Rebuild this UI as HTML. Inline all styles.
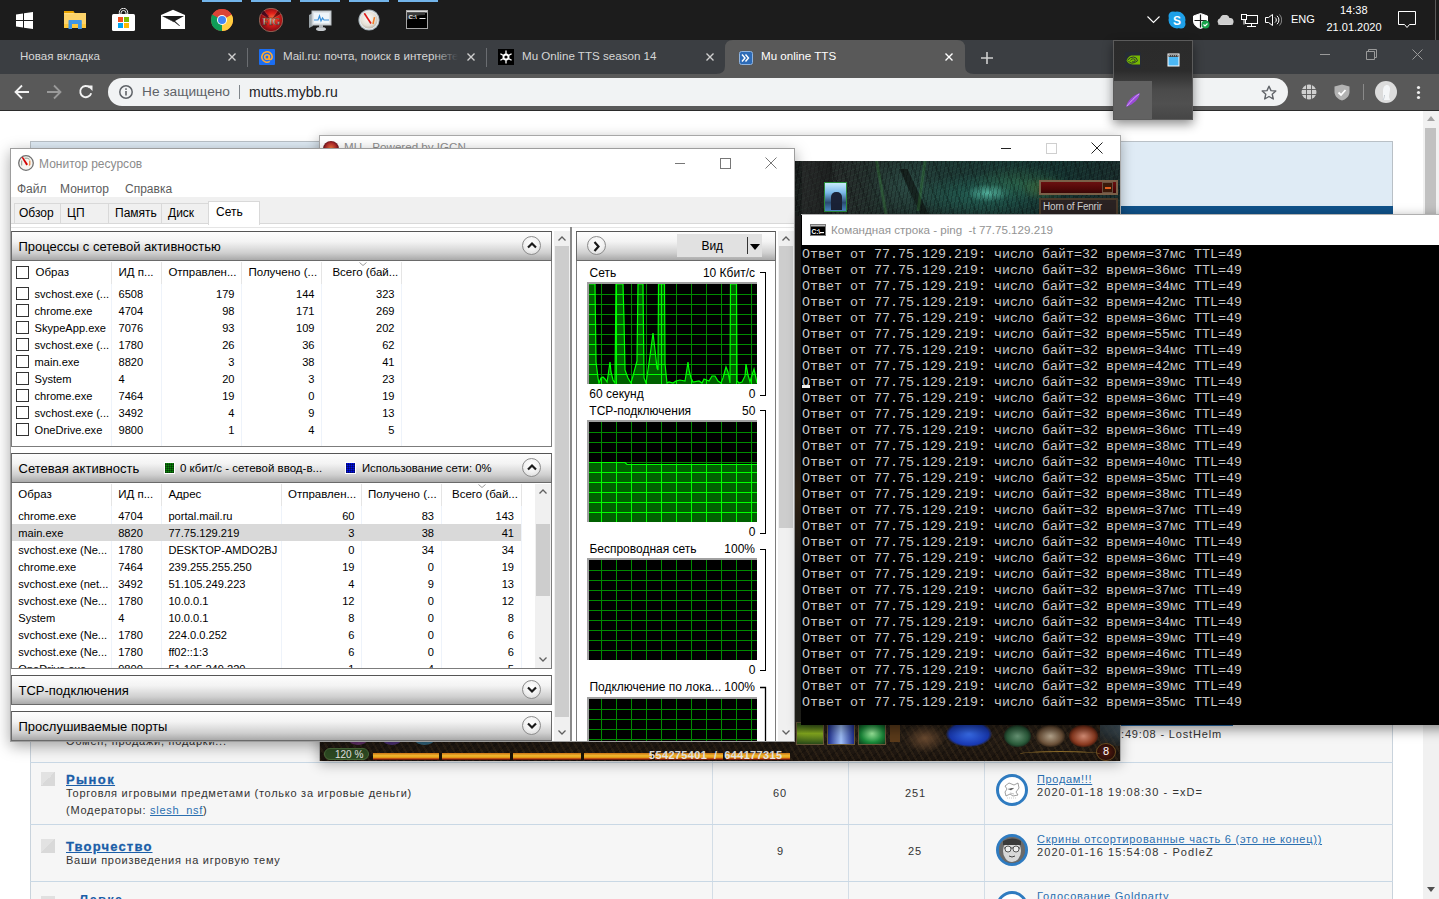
<!DOCTYPE html>
<html><head><meta charset="utf-8">
<style>
*{margin:0;padding:0;box-sizing:border-box}
html,body{width:1439px;height:899px;overflow:hidden;background:#fff;font-family:"Liberation Sans",sans-serif}
.a{position:absolute}
.t{position:absolute;white-space:pre;line-height:1}
#taskbar{left:0;top:0;width:1439px;height:40px;background:#1c1c1c}
.ind{top:0;height:2px;background:#72b4ea}
#tabs{left:0;top:40px;width:1439px;height:34px;background:#3b3e42}
#toolbar{left:0;top:74px;width:1439px;height:36px;background:#595959}
#page{left:0;top:111px;width:1439px;height:788px;background:#fff;overflow:hidden}
</style></head><body>

<!-- TASKBAR -->
<div id="taskbar" class="a">
  <div class="a ind" style="left:202px;width:40px"></div>
  <div class="a ind" style="left:251px;width:40px"></div>
  <div class="a ind" style="left:300px;width:40px"></div>
  <div class="a ind" style="left:349px;width:40px"></div>
  <div class="a ind" style="left:398px;width:40px"></div>

  <!-- win logo -->
  <svg class="a" style="left:16px;top:12px" width="17" height="17" viewBox="0 0 17 17"><path fill="#fff" d="M0 2.4L7 1.4V8H0z M8 1.25L17 0V8H8z M0 9H7V15.6L0 14.6z M8 9H17V17L8 15.75z"/></svg>
  <!-- explorer -->
  <svg class="a" style="left:64px;top:10px" width="22" height="20" viewBox="0 0 22 20"><path fill="#e9a400" d="M0 1h9.5l0.8 1.2V4H0z"/><path fill="#fcd36a" d="M0 3h22v15H0z"/><path fill="#ffe08a" d="M0 3.2h9.5v1H0z"/><path fill="#fdc83a" d="M0 14h22v4H0z"/><path fill="#3d95e6" d="M4.5 10.8Q4.5 10 5.3 10H17Q17.8 10 17.8 10.8V19H14V14H8V19H4.5z"/></svg>
  <!-- store -->
  <svg class="a" style="left:112px;top:8px" width="23" height="23" viewBox="0 0 23 23"><path fill="none" stroke="#fff" stroke-width="0.9" d="M7.3 7V4.5a4.2 4.2 0 0 1 8.4 0V7M9 7V5a2.5 2.5 0 0 1 5 0V7"/><rect x="0" y="6" width="23" height="17" rx="1.5" fill="#fff"/><rect x="6" y="9" width="5" height="5" fill="#f25022"/><rect x="12" y="9" width="5" height="5" fill="#7fba00"/><rect x="6" y="15" width="5" height="5" fill="#00a4ef"/><rect x="12" y="15" width="5" height="5" fill="#ffb900"/></svg>
  <!-- mail -->
  <svg class="a" style="left:160px;top:9px" width="26" height="21" viewBox="0 0 26 21"><path fill="#fff" d="M1 6L13 0.7L25 6V20H1z"/><path fill="#1c1c1c" d="M2 7H24L15 12L20 16.8L19.3 17L14 12.8z"/><path fill="#1c1c1c" d="M2 7L14.5 12.8 14 13.2z"/></svg>
  <!-- chrome -->
  <svg class="a" style="left:211px;top:9px" width="22" height="22" viewBox="0 0 22 22"><circle cx="11" cy="11" r="11" fill="#db4437"/><path fill="#0f9d58" d="M11 11L1.5 16.5A11 11 0 0 0 11 22z M11 11L1.5 16.5 0.6 5.5z"/><path fill="#0f9d58" d="M11 11 L5.5 20.5 A11 11 0 0 1 0 11 A11 11 0 0 1 1.47 5.5z"/><path fill="#ffcd40" d="M11 11L20.53 5.5A11 11 0 0 1 11 22 z"/><path fill="#db4437" d="M11 11L1.47 5.5A11 11 0 0 1 20.53 5.5z"/><circle cx="11" cy="11" r="5" fill="#fff"/><circle cx="11" cy="11" r="4" fill="#4285f4"/></svg>
  <!-- FIG game -->
  <svg class="a" style="left:259px;top:8px" width="24" height="24" viewBox="0 0 24 24"><defs><radialGradient id="fg" cx="55%" cy="45%" r="55%"><stop offset="0" stop-color="#ff7a40"/><stop offset="0.45" stop-color="#e0201a"/><stop offset="1" stop-color="#7a0812"/></radialGradient><linearGradient id="fgt" x1="0" y1="0" x2="0" y2="1"><stop offset="0" stop-color="#fff6e0"/><stop offset="0.5" stop-color="#c8b8a8"/><stop offset="1" stop-color="#6a5a70"/></linearGradient></defs><circle cx="12" cy="12" r="11.7" fill="url(#fg)" stroke="#b89a80" stroke-width="0.6"/><path d="M2 6L12 12 5 2M22 6L12 12 19 2" stroke="#ff8080" stroke-width="0.5" opacity="0.5"/><path d="M3 4l6 5" stroke="#3a0a30" stroke-width="3" opacity="0.5"/><text x="12.5" y="17" font-family="Liberation Serif" font-weight="bold" font-size="10" fill="url(#fgt)" text-anchor="middle" stroke="#3a2010" stroke-width="0.3">FIG</text></svg>
  <!-- resmon perf icon -->
  <svg class="a" style="left:308px;top:10px" width="24" height="22" viewBox="0 0 24 22"><path fill="#9aa3a8" d="M1 5l4-2v13l-4 2z"/><rect x="4" y="1" width="19" height="14" fill="#dfe4e8" stroke="#b8bec2"/><rect x="6" y="3" width="15" height="10" fill="#eef5fa"/><path fill="none" stroke="#3a8fd8" stroke-width="1.2" d="M6 10h4l1.5-4 1.5 5 1.5-3 1.5 2h5"/><ellipse cx="13" cy="19" rx="5" ry="2" fill="#c8ccd0"/><rect x="11" y="15" width="4" height="3" fill="#b0b5b9"/></svg>
  <!-- gauge -->
  <svg class="a" style="left:358px;top:9px" width="22" height="22" viewBox="0 0 22 22"><defs><radialGradient id="gg" cx="45%" cy="40%" r="60%"><stop offset="0" stop-color="#fbfaf6"/><stop offset="0.7" stop-color="#e6e0d6"/><stop offset="1" stop-color="#bdb6aa"/></radialGradient></defs><circle cx="11" cy="11" r="10.6" fill="#a9b4ba"/><circle cx="11" cy="11" r="9.6" fill="#e9eef0"/><circle cx="11" cy="11" r="8.6" fill="url(#gg)"/><path d="M6.3 4.3L13 14.5" stroke="#e01818" stroke-width="1.6"/><path d="M16.5 8.2L15 15" stroke="#f07a20" stroke-width="1.5"/></svg>
  <!-- cmd -->
  <svg class="a" style="left:406px;top:10px" width="22" height="19" viewBox="0 0 22 19"><rect x="0.5" y="0.5" width="21" height="18" fill="#000" stroke="#a8a8a8"/><rect x="1" y="1" width="20" height="1.5" fill="#dcdcdc"/><path d="M1 2.5H19V5Q8 5 1 10z" fill="#3a3a3a"/><text x="2.6" y="9.2" font-family="Liberation Sans" font-weight="bold" font-size="6.2" fill="#f0f0f0">C:\</text><rect x="13.5" y="8" width="6" height="1" fill="#e8e8e8"/></svg>

  <!-- tray -->
  <svg class="a" style="left:1147px;top:16px" width="13" height="8" viewBox="0 0 13 8"><path d="M0.5 0.5L6.5 6.5L12.5 0.5" stroke="#fff" fill="none" stroke-width="1.1"/></svg>
  <svg class="a" style="left:1168px;top:11px" width="18" height="18" viewBox="0 0 18 18"><circle cx="9" cy="9" r="8.5" fill="#1ea0e8"/><circle cx="5" cy="5" r="4.5" fill="#1ea0e8"/><circle cx="13" cy="13" r="4.5" fill="#1ea0e8"/><text x="9" y="13.5" font-family="Liberation Sans" font-weight="bold" font-size="12" fill="#fff" text-anchor="middle">S</text></svg>
  <svg class="a" style="left:1193px;top:13px" width="17" height="16" viewBox="0 0 17 16"><path d="M7.5 0.5L14.5 3V8c0 4-3.5 6.5-7 7.5C4 14.5 0.5 12 0.5 8V3z" fill="#fff" stroke="#fff"/><path d="M7.5 1.5V14.5M1.5 7.5H13.5" stroke="#1c1c1c" stroke-width="1.2"/><circle cx="12.5" cy="11.5" r="4" fill="#17a34a"/><path d="M10.5 11.5l1.5 1.5 2.5-2.5" stroke="#fff" stroke-width="1.1" fill="none"/></svg>
  <svg class="a" style="left:1217px;top:15px" width="17" height="10" viewBox="0 0 17 10"><path d="M3.5 10A3.5 3.5 0 0 1 3 3.2 5 5 0 0 1 12.5 3 3.5 3.5 0 0 1 13.5 10z" fill="#cfcfcf"/><path d="M1 10h15" stroke="#e0e0e0"/></svg>
  <svg class="a" style="left:1241px;top:14px" width="17" height="13" viewBox="0 0 17 13"><rect x="4.5" y="1.5" width="12" height="8" fill="none" stroke="#fff"/><rect x="0.5" y="0.5" width="5" height="5" fill="#1c1c1c" stroke="#fff"/><path d="M10.5 9.5v3M6 12.5h9M3 5.5v5" stroke="#fff"/></svg>
  <svg class="a" style="left:1265px;top:14px" width="17" height="12" viewBox="0 0 17 12"><path d="M0.5 3.5h3L7.5 0.5v11l-4-3h-3z" fill="none" stroke="#fff"/><path d="M10 3.5a3 3 0 0 1 0 5M12 1.8a5.5 5.5 0 0 1 0 8.4" stroke="#fff" fill="none"/><path d="M14.5 0.5a8 8 0 0 1 0 11" stroke="#888" fill="none"/></svg>
  <div class="t" style="left:1291px;top:13.7px;font-size:11px;color:#fff">ENG</div>
  <div class="t" style="left:1340px;top:4.7px;font-size:11px;color:#fff">14:38</div>
  <div class="t" style="left:1326.5px;top:22.3px;font-size:11px;color:#fff">21.01.2020</div>
  <svg class="a" style="left:1398px;top:11px" width="18" height="18" viewBox="0 0 18 18"><path d="M0.5 0.5h17v13h-6l-2.5 3-2.5-3h-6z" fill="none" stroke="#fff"/></svg>
  <div class="a" style="left:1435px;top:0;width:1px;height:40px;background:#5a5a5a"></div>
</div>

<!-- CHROME TABS -->
<div id="tabs" class="a">
  <div class="t" style="left:20px;top:10px;font-size:11.6px;color:#d6d6d6">Новая вкладка</div>
  <svg class="a" style="left:228px;top:13px" width="8" height="8" viewBox="0 0 8 8"><path d="M0.5 0.5L7.5 7.5M7.5 0.5L0.5 7.5" stroke="#cfcfcf" stroke-width="1.4"/></svg>
  <div class="a" style="left:247px;top:8px;width:1px;height:19px;background:#6a6d71"></div>
  <svg class="a" style="left:259px;top:9px" width="16" height="16" viewBox="0 0 16 16"><rect width="16" height="16" rx="1" fill="#1b6ef3"/><circle cx="8" cy="8" r="2.3" fill="none" stroke="#ffa930" stroke-width="1.6"/><path d="M10.3 6.2V9.2Q10.3 10.8 11.8 10.5Q13.2 10 13.2 7.8A5.2 5.2 0 1 0 10.8 12.4" fill="none" stroke="#ffa930" stroke-width="1.6"/></svg>
  <div class="a" style="left:283px;top:0;width:175px;height:34px;overflow:hidden">
    <div class="t" style="left:0;top:10px;font-size:11.6px;color:#d6d6d6">Mail.ru: почта, поиск в интернете</div>
    <div class="a" style="left:150px;top:0;width:25px;height:34px;background:linear-gradient(90deg,rgba(59,62,66,0),#3b3e42)"></div>
  </div>
  <svg class="a" style="left:467px;top:13px" width="8" height="8" viewBox="0 0 8 8"><path d="M0.5 0.5L7.5 7.5M7.5 0.5L0.5 7.5" stroke="#cfcfcf" stroke-width="1.4"/></svg>
  <div class="a" style="left:486px;top:8px;width:1px;height:19px;background:#6a6d71"></div>
  <svg class="a" style="left:498px;top:9px" width="16" height="16" viewBox="0 0 16 16"><rect width="16" height="16" fill="#000"/><g stroke="#fff" stroke-width="1.3"><path d="M8 1.5V14.5M2.4 4.7L13.6 11.3M2.4 11.3L13.6 4.7"/></g><circle cx="8" cy="8" r="3.5" fill="#fff"/><circle cx="8" cy="8" r="1.6" fill="#000"/></svg>
  <div class="t" style="left:522px;top:10px;font-size:11.6px;color:#d6d6d6">Mu Online TTS season 14</div>
  <svg class="a" style="left:706px;top:13px" width="8" height="8" viewBox="0 0 8 8"><path d="M0.5 0.5L7.5 7.5M7.5 0.5L0.5 7.5" stroke="#cfcfcf" stroke-width="1.4"/></svg>
  <!-- active tab -->
  <svg class="a" style="left:716px;top:0px" width="259" height="34" viewBox="0 0 259 34"><path d="M0 34 Q9 34 9 26 V8 Q9 0 17 0 H241 Q249 0 249 8 V26 Q249 34 258 34z" fill="#595959"/></svg>
  <svg class="a" style="left:739px;top:11px" width="14" height="14" viewBox="0 0 14 14"><rect x="0.5" y="0.5" width="13" height="13" rx="2" fill="#2d6bb7" stroke="#8fb4e0"/><path d="M3 3.5L6 7 3 10.5M6.5 3.5L9.5 7 6.5 10.5" stroke="#fff" stroke-width="1.4" fill="none"/></svg>
  <div class="t" style="left:761px;top:10px;font-size:11.6px;color:#fff">Mu online TTS</div>
  <svg class="a" style="left:945px;top:13px" width="8" height="8" viewBox="0 0 8 8"><path d="M0.5 0.5L7.5 7.5M7.5 0.5L0.5 7.5" stroke="#fff" stroke-width="1.4"/></svg>
  <svg class="a" style="left:981px;top:12px" width="12" height="12" viewBox="0 0 12 12"><path d="M6 0V12M0 6H12" stroke="#cfcfcf" stroke-width="1.6"/></svg>
  <div class="a" style="left:1320px;top:14px;width:10px;height:1px;background:#9a9a9a"></div>
  <svg class="a" style="left:1366px;top:9px" width="11" height="11" viewBox="0 0 11 11"><path d="M0.5 2.5h8v8h-8z M2.5 2.5v-2h8v8h-2" stroke="#9a9a9a" fill="none"/></svg>
  <svg class="a" style="left:1412px;top:9px" width="11" height="11" viewBox="0 0 11 11"><path d="M0.5 0.5L10.5 10.5M10.5 0.5L0.5 10.5" stroke="#9a9a9a"/></svg>
</div>
<div id="toolbar" class="a">
  <svg class="a" style="left:14px;top:10px" width="16" height="16" viewBox="0 0 16 16"><path d="M15 8H2M8 1.5L1.5 8 8 14.5" stroke="#f2f2f2" stroke-width="1.8" fill="none"/></svg>
  <svg class="a" style="left:46px;top:10px" width="16" height="16" viewBox="0 0 16 16"><path d="M1 8H14M8 1.5L14.5 8 8 14.5" stroke="#9a9a9a" stroke-width="1.8" fill="none"/></svg>
  <svg class="a" style="left:78px;top:10px" width="16" height="16" viewBox="0 0 16 16"><path d="M13.2 9.2A5.6 5.6 0 1 1 11.8 3.6" stroke="#f2f2f2" stroke-width="1.9" fill="none"/><path d="M9 1.5H14.5V7z" fill="#f2f2f2"/></svg>
  <div class="a" style="left:108px;top:4px;width:1180px;height:28px;border-radius:14px;background:#f1f3f4"></div>
  <svg class="a" style="left:119px;top:11px" width="14" height="14" viewBox="0 0 14 14"><circle cx="7" cy="7" r="6.2" fill="none" stroke="#5f6368" stroke-width="1.5"/><rect x="6.2" y="6" width="1.6" height="4.5" fill="#5f6368"/><rect x="6.2" y="3.3" width="1.6" height="1.6" fill="#5f6368"/></svg>
  <div class="t" style="left:142px;top:11px;font-size:13.7px;color:#5f6368">Не защищено</div>
  <div class="a" style="left:239px;top:11px;width:1px;height:14px;background:#80868b"></div>
  <div class="t" style="left:249px;top:11px;font-size:14px;color:#202124">mutts.mybb.ru</div>
  <svg class="a" style="left:1261px;top:11px" width="16" height="15" viewBox="0 0 16 15"><path d="M8 1.2L10 5.6 14.8 6 11.2 9.2 12.3 14 8 11.5 3.7 14 4.8 9.2 1.2 6 6 5.6z" fill="none" stroke="#5f6368" stroke-width="1.4" stroke-linejoin="round"/></svg>
  <svg class="a" style="left:1301px;top:10px" width="16" height="16" viewBox="0 0 16 16"><circle cx="8" cy="8" r="7.5" fill="#cfcfcf"/><g stroke="#595959" stroke-width="0.9" fill="none"><path d="M0.5 5.5H15.5M0.5 10.5H15.5M5.5 0.5V15.5M10.5 0.5V15.5"/></g></svg>
  <svg class="a" style="left:1334px;top:10px" width="16" height="17" viewBox="0 0 16 17"><path d="M8 0.5L15.5 2.5V8c0 4.5-4 7.5-7.5 8.5C4.5 15.5 0.5 12.5 0.5 8V2.5z" fill="#b3b3b3"/><path d="M4.5 8.5L7 11 11.5 6" stroke="#fff" stroke-width="1.8" fill="none"/></svg>
  <div class="a" style="left:1363px;top:10px;width:1px;height:16px;background:#8a8a8a"></div>
  <svg class="a" style="left:1375px;top:7px" width="22" height="22" viewBox="0 0 22 22"><circle cx="11" cy="11" r="11" fill="#dcdcdc"/><path d="M8 19V10c0-4 2-6 4-6s3.5 2 3 5-1 5-1 7l1 3z" fill="#f4f6f8"/><path d="M8 19c1-2 1.5-3 1.5-5" stroke="#c5ccd3" fill="none"/></svg>
  <svg class="a" style="left:1416px;top:11px" width="5" height="15" viewBox="0 0 5 15"><circle cx="2.5" cy="2.5" r="1.6" fill="#eee"/><circle cx="2.5" cy="7.5" r="1.6" fill="#eee"/><circle cx="2.5" cy="12.5" r="1.6" fill="#eee"/></svg>
</div>
<div class="a" style="left:0;top:110px;width:1439px;height:1px;background:#2b2b2b"></div>

<!-- PAGE -->
<div id="page" class="a">
  <!-- header box -->
  <div class="a" style="left:30px;top:30px;width:1363px;height:66px;background:#dfebf5;border:1px solid #b9c0c6;border-bottom:0"></div>
  <div class="a" style="left:30px;top:95px;width:1363px;height:30px;background:#10528a"></div>
  <!-- table -->
  <div class="a" style="left:30px;top:125px;width:1363px;height:670px;background:#f6f6f6;border-left:1px solid #c9d3dc;border-right:1px solid #c9d3dc"></div>
  <div class="a" style="left:712px;top:125px;width:1px;height:670px;background:#d3dde6"></div>
  <div class="a" style="left:848px;top:125px;width:1px;height:670px;background:#d3dde6"></div>
  <div class="a" style="left:984px;top:125px;width:1px;height:670px;background:#d3dde6"></div>
  <div class="a" style="left:30px;top:651px;width:1363px;height:1px;background:#c9d8e5"></div>
  <div class="a" style="left:30px;top:713px;width:1363px;height:1px;background:#c9d8e5"></div>
  <div class="a" style="left:30px;top:770px;width:1363px;height:1px;background:#c9d8e5"></div>

  <div class="t" style="left:66px;top:625px;font-size:11px;letter-spacing:0.75px;color:#333">Обмен, продажи, подарки...</div>
  <div class="t" style="left:1121px;top:617.5px;font-size:11px;letter-spacing:0.83px;color:#333">:49:08 - LostHelm</div>
  <div class="a" style="left:1121px;top:614px;width:112px;height:1px;background:#2a6fb0"></div>

  <!-- row Рынок -->
  <div class="a" style="left:41px;top:661px;width:14px;height:14px;background:linear-gradient(135deg,#e2e2e2 50%,#d9d9d9 50%)"></div>
  <div class="t" style="left:66px;top:662px;font-size:13px;font-weight:bold;letter-spacing:1.4px;color:#1b5ea8;text-decoration:underline;-webkit-text-stroke:0.3px #1b5ea8">Рынок</div>
  <div class="t" style="left:66px;top:677px;font-size:11px;letter-spacing:0.73px;color:#333">Торговля игровыми предметами (только за игровые деньги)</div>
  <div class="t" style="left:66px;top:694px;font-size:11px;letter-spacing:0.73px;color:#333">(Модераторы: <span style="color:#2a6fb0;text-decoration:underline">slesh_nsf</span>)</div>
  <div class="t" style="left:773px;top:677px;font-size:11px;letter-spacing:0.9px;color:#333">60</div>
  <div class="t" style="left:905px;top:677px;font-size:11px;letter-spacing:0.9px;color:#333">251</div>
  <div class="a" style="left:996px;top:663px;width:32px;height:32px;border-radius:50%;border:3px solid #2f7bc0;background:#fff;overflow:hidden"><svg width="26" height="26" viewBox="0 0 26 26"><path d="M6 9l4-3 5 2 4-2 1 5-3 4 2 3-5 1-3-2-4 2-1-4 2-3z" fill="none" stroke="#777" stroke-width="0.7"/><path d="M9 12l3 1 3-2M11 16l4 1" stroke="#999" stroke-width="0.6"/><path d="M8 21h10" stroke="#aaa" stroke-width="0.6" stroke-dasharray="1 1"/></svg></div>
  <div class="t" style="left:1037px;top:663px;font-size:11px;letter-spacing:0.67px;color:#2a6fb0;text-decoration:underline">Продам!!!</div>
  <div class="t" style="left:1037px;top:676px;font-size:11px;letter-spacing:1.07px;color:#333">2020-01-18 19:08:30 - =xD=</div>

  <!-- row Творчество -->
  <div class="a" style="left:41px;top:728px;width:14px;height:14px;background:linear-gradient(135deg,#e2e2e2 50%,#d9d9d9 50%)"></div>
  <div class="t" style="left:66px;top:729px;font-size:13px;font-weight:bold;letter-spacing:1.17px;color:#1b5ea8;text-decoration:underline;-webkit-text-stroke:0.3px #1b5ea8">Творчество</div>
  <div class="t" style="left:66px;top:744px;font-size:11px;letter-spacing:0.73px;color:#333">Ваши произведения на игровую тему</div>
  <div class="t" style="left:777px;top:735px;font-size:11px;letter-spacing:0.9px;color:#333">9</div>
  <div class="t" style="left:908px;top:735px;font-size:11px;letter-spacing:0.9px;color:#333">25</div>
  <div class="a" style="left:996px;top:723px;width:32px;height:32px;border-radius:50%;border:3px solid #2f7bc0;background:radial-gradient(circle at 50% 45%,#ddd 0,#bbb 40%,#555 75%);overflow:hidden"><svg width="26" height="26" viewBox="0 0 26 26"><rect width="26" height="26" fill="#6a6a6a"/><ellipse cx="13" cy="14" rx="9" ry="11" fill="#d8d8d8"/><path d="M5 11h16" stroke="#444" stroke-width="1.2"/><circle cx="9" cy="12" r="3" fill="#eee" stroke="#333" stroke-width="0.8"/><circle cx="17" cy="12" r="3" fill="#eee" stroke="#333" stroke-width="0.8"/><path d="M10 19q3 2 6 0" stroke="#444" fill="none"/><path d="M4 4q9-5 18 0v4H4z" fill="#3a3a3a"/></svg></div>
  <div class="t" style="left:1037px;top:723px;font-size:11px;letter-spacing:0.75px;color:#2a6fb0;text-decoration:underline">Скрины отсортированные часть 6 (это не конец))</div>
  <div class="t" style="left:1037px;top:736px;font-size:11px;letter-spacing:1.07px;color:#333">2020-01-16 15:54:08 - PodleZ</div>

  <!-- row 4 -->
  <div class="a" style="left:41px;top:785px;width:14px;height:14px;background:#e0e0e0"></div>
  <div class="t" style="left:79px;top:782px;font-size:13px;font-weight:bold;letter-spacing:1.2px;color:#1b5ea8">Лавка</div>
  <div class="a" style="left:996px;top:780px;width:32px;height:32px;border-radius:50%;border:3px solid #2f7bc0;background:#fff"></div>
  <div class="t" style="left:1037px;top:780px;font-size:11px;letter-spacing:0.75px;color:#2a6fb0;text-decoration:underline">Голосование Goldparty</div>

  <!-- scrollbar -->
  <div class="a" style="left:1423px;top:0;width:16px;height:788px;background:#f1f1f1"></div>
  <svg class="a" style="left:1427px;top:5px" width="8" height="5" viewBox="0 0 8 5"><path d="M0 5L4 0 8 5z" fill="#a3a3a3"/></svg>
  <div class="a" style="left:1425px;top:17px;width:11px;height:300px;background:#c1c1c1"></div>
  <svg class="a" style="left:1427px;top:776px" width="8" height="5" viewBox="0 0 8 5"><path d="M0 0L4 5 8 0z" fill="#505050"/></svg>
</div>

<!--GAME-->
<div class="a" style="left:319px;top:135px;width:802px;height:626px;background:#fff;border:1px solid #a8a8a8;box-shadow:0 3px 12px rgba(0,0,0,0.3)"></div>
<svg class="a" style="left:323px;top:141px" width="16" height="16" viewBox="0 0 16 16"><defs><radialGradient id="mg" cx="50%" cy="45%" r="55%"><stop offset="0" stop-color="#f27a40"/><stop offset="0.6" stop-color="#b22a2a"/><stop offset="1" stop-color="#3a0a14"/></radialGradient></defs><circle cx="8" cy="8" r="8" fill="url(#mg)"/></svg>
<div class="t" style="left:344px;top:141.4px;font-size:11.6px;color:#8e8e8e">MU - Powered by IGCN</div>
<div class="a" style="left:1001px;top:148px;width:10px;height:1px;background:#222"></div>
<div class="a" style="left:1046px;top:143px;width:11px;height:11px;border:1px solid #cfcfcf"></div>
<svg class="a" style="left:1091px;top:142px" width="12" height="12" viewBox="0 0 12 12"><path d="M0.5 0.5L11.5 11.5M11.5 0.5L0.5 11.5" stroke="#222" stroke-width="1"/></svg>
<div class="a" style="left:320px;top:161px;width:800px;height:600px;overflow:hidden;background:
radial-gradient(ellipse 22px 9px at 668px 32px, rgba(120,240,215,0.55), transparent),
radial-gradient(ellipse 70px 22px at 660px 34px, rgba(40,140,120,0.45), transparent),
radial-gradient(ellipse 40px 30px at 585px 25px, rgba(60,110,100,0.35), transparent),
radial-gradient(ellipse 50px 18px at 700px 22px, rgba(70,150,90,0.35), transparent),
linear-gradient(90deg,#1b1e1e 0px,#1d2120 475px,#262b2a 520px,#22302d 560px,#1e3834 620px,#1a3935 680px,#153230 740px,#1a2c2c 800px)">
<div class="a" style="left:0;top:0;width:800px;height:600px;opacity:0.7;background-image:repeating-linear-gradient(100deg,rgba(0,0,0,0.35) 0 1px,transparent 1px 4px),repeating-linear-gradient(160deg,rgba(80,150,110,0.12) 0 1px,transparent 1px 5px),repeating-linear-gradient(70deg,rgba(0,0,0,0.25) 0 2px,transparent 2px 11px)"></div>
<div class="a" style="left:482px;top:0;width:30px;height:60px;background:linear-gradient(90deg,rgba(60,60,60,0.35),rgba(20,20,20,0.5))"></div>
<div class="a" style="left:590px;top:8px;width:8px;height:45px;background:rgba(10,10,8,0.55);transform:skewX(25deg)"></div>
<div class="a" style="left:560px;top:0;width:3px;height:55px;background:rgba(70,170,70,0.25);transform:skewX(10deg)"></div>
<div class="a" style="left:600px;top:0;width:3px;height:50px;background:rgba(70,170,70,0.25);transform:skewX(-8deg)"></div>
<div class="a" style="left:700px;top:15px;width:50px;height:25px;background:radial-gradient(rgba(120,160,60,0.3),transparent 70%)"></div>
<div class="a" style="left:504px;top:21px;width:23px;height:30px;border:1px solid #2a8a3a;background:linear-gradient(#c8ecfc,#7ab8e8 35%,#2a4a70 70%,#4a8ac8)"></div>
<div class="a" style="left:511px;top:31px;width:11px;height:18px;border-radius:5px 5px 0 0;background:#1a2236"></div>
<div class="a" style="left:719px;top:19px;width:79px;height:15px;background:linear-gradient(#6a1010,#520808 60%,#3a0606);border:2px solid #7a6048"></div>
<div class="a" style="left:782px;top:21px;width:11px;height:11px;background:#3a1a0a;border:1px solid #6a5040"></div>
<div class="a" style="left:785px;top:26px;width:6px;height:2px;background:#e06020"></div>
<div class="a" style="left:719px;top:37px;width:79px;height:18px;background:#2a2222;border:2px solid #4a3a2a"></div>
<div class="t" style="left:723px;top:41px;font-size:10px;letter-spacing:-0.2px;color:#cfcfcf">Horn of Fenrir</div>
<!-- left strip texture near x 475-482 -->
<div class="a" style="left:474px;top:55px;width:8px;height:510px;background:linear-gradient(#222 0%,#2a2218 20%,#1a1a1a 40%,#3a2a18 55%,#1c1c1c 70%,#2a2a22 100%)"></div>
<!-- bottom HUD -->
<div class="a" style="left:0;top:562px;width:800px;height:38px;background:linear-gradient(#2a2118,#231b14 50%,#1a130d)"></div>
<div class="a" style="left:0;top:562px;width:800px;height:38px;background-image:repeating-linear-gradient(60deg,rgba(120,90,50,0.15) 0 2px,transparent 2px 6px),repeating-linear-gradient(-40deg,rgba(0,0,0,0.2) 0 2px,transparent 2px 7px)"></div>
<div class="a" style="left:29px;top:574px;width:18px;height:10px;border-radius:50%;background:rgba(130,60,150,0.7)"></div>
<div class="a" style="left:63px;top:574px;width:18px;height:10px;border-radius:50%;background:rgba(100,60,170,0.7)"></div>
<div class="a" style="left:95px;top:574px;width:19px;height:10px;border-radius:50%;background:rgba(60,140,180,0.7)"></div>
<div class="a" style="left:476px;top:561px;width:28px;height:23px;background:linear-gradient(#2a4a1a,#8ab020 50%,#2a4a1a);border:1px solid #6a5a3a"></div>
<div class="a" style="left:507px;top:561px;width:28px;height:23px;background:linear-gradient(90deg,#1a2a8a,#a0c0f8 50%,#1a2a8a);border:1px solid #6a5a3a"></div>
<div class="a" style="left:538px;top:561px;width:28px;height:23px;background:radial-gradient(#a0f0a0,#1a8a3a 60%,#0a3a1a);border:1px solid #6a5a3a"></div>
<div class="a" style="left:570px;top:561px;width:10px;height:20px;background:#5a3a1a"></div>
<div class="a" style="left:585px;top:562px;width:40px;height:30px;background:radial-gradient(#6a4a30,transparent 70%)"></div>
<div class="a" style="left:626px;top:560px;width:46px;height:26px;border-radius:50%;background:radial-gradient(#3a70f0,#1838b0 60%,transparent 72%)"></div>
<div class="a" style="left:684px;top:564px;width:27px;height:22px;border-radius:50%;background:radial-gradient(#6a9878,#2a5a3a 55%,#101a12 80%)"></div>
<div class="a" style="left:716px;top:564px;width:29px;height:22px;border-radius:50%;background:radial-gradient(#b8a890,#6a5038 55%,#1a120a 80%)"></div>
<div class="a" style="left:749px;top:564px;width:29px;height:22px;border-radius:50%;background:radial-gradient(#d89078,#8a3a20 55%,#2a0e06 80%)"></div>
<div class="a" style="left:780px;top:560px;width:20px;height:25px;background:linear-gradient(200deg,rgba(90,120,140,0.8),rgba(40,58,68,0.6) 60%,transparent)"></div>
<div class="a" style="left:776px;top:582px;width:20px;height:18px;border-radius:50%;background:radial-gradient(#5a1a10,#2a0e08 70%);border:1px solid #6a4a20"></div><div class="a" style="left:700px;top:590px;width:80px;height:6px;border-top:1px solid #8a6a2a;border-radius:50%"></div>
<div class="t" style="left:783px;top:585px;font-size:11px;color:#fff">8</div>
<div class="a" style="left:4px;top:587px;width:45px;height:12px;border-radius:6px;background:#2d4a22;border:1px solid #4a6a3a"></div>
<div class="t" style="left:15px;top:589px;font-size:10px;color:#e8e8e8">120 %</div>
<div class="a" style="left:53px;top:592px;width:417px;height:7px;background:linear-gradient(#d87a18,#f8c030 40%,#e89a18 65%,#b03010 85%,#3a0a04)"></div>
<div class="a" style="left:53px;top:592px;width:417px;height:7px;background-image:repeating-linear-gradient(90deg,transparent 0 66px,#1a1208 66px 69px,transparent 69px 71px)"></div>
<div class="t" style="left:329px;top:588.5px;font-size:11px;letter-spacing:0.35px;color:#e8e8e8;font-weight:bold">554275401  /  644177315</div>
</div>
<!--/GAME-->
<!--RESMON-->
<div class="a" style="left:10px;top:148px;width:785px;height:594px;background:#fff;border:1px solid #9d9d9d;box-shadow:0 4px 14px rgba(0,0,0,0.35)"></div>
<svg class="a" style="left:18px;top:155px" width="16" height="16" viewBox="0 0 16 16"><circle cx="8" cy="8" r="7.3" fill="#f6f4f0" stroke="#707070" stroke-width="1.3"/><path d="M3.7 10.5V5.5M6.5 3.2Q9.5 2.6 11.5 4.3" stroke="#8a9a8a" stroke-width="1" fill="none"/><path d="M11.8 5.5V9.5L11 10.5" stroke="#e8782a" stroke-width="1.1" fill="none"/><path d="M3.6 2.4L5 1.9L10 9.3L8.3 10.6z" fill="#d40000"/></svg>
<div class="t" style="left:39px;top:158.3px;font-size:12px;color:#8b8b8b;">Монитор ресурсов</div>
<div class="a" style="left:675px;top:163px;width:10px;height:1px;background:#777"></div>
<div class="a" style="left:720px;top:158px;width:11px;height:11px;border:1px solid #777"></div>
<svg class="a" style="left:765px;top:157px" width="12" height="12" viewBox="0 0 12 12"><path d="M0.5 0.5L11.5 11.5M11.5 0.5L0.5 11.5" stroke="#777" stroke-width="1"/></svg>
<div class="t" style="left:17px;top:182.7px;font-size:12px;color:#5c5c5c;">Файл</div>
<div class="t" style="left:60px;top:182.7px;font-size:12px;color:#5c5c5c;">Монитор</div>
<div class="t" style="left:125px;top:182.7px;font-size:12px;color:#5c5c5c;">Справка</div>
<div class="a" style="left:11px;top:197px;width:783px;height:27px;background:#f0f0f0"></div>
<div class="a" style="left:11px;top:223px;width:783px;height:1px;background:#d9d9d9"></div>
<div class="a" style="left:11px;top:227px;width:783px;height:1px;background:#e5e5e5"></div>
<div class="a" style="left:14px;top:203px;width:47px;height:21px;border:1px solid #d9d9d9;background:#f0f0f0"></div>
<div class="t" style="left:19px;top:207.1px;font-size:12px;color:#000;">Обзор</div>
<div class="a" style="left:60px;top:203px;width:49px;height:21px;border:1px solid #d9d9d9;background:#f0f0f0"></div>
<div class="t" style="left:67px;top:207.1px;font-size:12px;color:#000;">ЦП</div>
<div class="a" style="left:108px;top:203px;width:54px;height:21px;border:1px solid #d9d9d9;background:#f0f0f0"></div>
<div class="t" style="left:115px;top:207.1px;font-size:12px;color:#000;">Память</div>
<div class="a" style="left:161px;top:203px;width:48px;height:21px;border:1px solid #d9d9d9;background:#f0f0f0"></div>
<div class="t" style="left:168px;top:207.1px;font-size:12px;color:#000;">Диск</div>
<div class="a" style="left:208px;top:201px;width:52px;height:24px;border:1px solid #d9d9d9;border-bottom:0;background:#fff"></div>
<div class="t" style="left:216px;top:206.3px;font-size:12px;color:#000;">Сеть</div>
<div class="a" style="left:11px;top:231px;width:541px;height:30px;border:1px solid #6a6a6a;border-top-color:#555;background:linear-gradient(#fdfdfd 0%,#f3f3f3 35%,#cfcfcf 75%,#a9a9a9 100%)"></div>
<div class="t" style="left:18.5px;top:239.7px;font-size:13px;color:#000;">Процессы с сетевой активностью</div>
<div class="a" style="left:522px;top:236px;width:19px;height:19px;border-radius:50%;border:1px solid #8c8c8c;background:radial-gradient(circle at 50% 35%,#fff 0,#f2f2f2 50%,#d4d4d4 100%)"></div>
<svg class="a" style="left:527px;top:241px" width="10" height="8" viewBox="0 0 10 8"><path d="M1 6.5L5 2.5 9 6.5" stroke="#1a1a1a" stroke-width="2.2" fill="none"/></svg>
<div class="a" style="left:11px;top:261px;width:541px;height:186px;background:#fff;border:1px solid #7c7c7c;border-top:0"></div>
<div class="a" style="left:111px;top:262px;width:1px;height:22px;background:#e5e5e5"></div>
<div class="a" style="left:111px;top:284px;width:1px;height:162px;background:#eef3fa"></div>
<div class="a" style="left:161px;top:262px;width:1px;height:22px;background:#e5e5e5"></div>
<div class="a" style="left:161px;top:284px;width:1px;height:162px;background:#eef3fa"></div>
<div class="a" style="left:241px;top:262px;width:1px;height:22px;background:#e5e5e5"></div>
<div class="a" style="left:241px;top:284px;width:1px;height:162px;background:#eef3fa"></div>
<div class="a" style="left:321px;top:262px;width:1px;height:22px;background:#e5e5e5"></div>
<div class="a" style="left:321px;top:284px;width:1px;height:162px;background:#eef3fa"></div>
<div class="a" style="left:401px;top:262px;width:1px;height:22px;background:#e5e5e5"></div>
<div class="a" style="left:401px;top:284px;width:1px;height:162px;background:#eef3fa"></div>
<div class="a" style="left:16px;top:266px;width:13px;height:13px;border:1px solid #333;background:#fff"></div>
<div class="t" style="left:35.5px;top:267.3px;font-size:11.5px;color:#000;">Образ</div>
<div class="t" style="left:118.5px;top:267.3px;font-size:11.5px;color:#000;">ИД п...</div>
<div class="t" style="left:168.4px;top:267.3px;font-size:11.5px;color:#000;">Отправлен...</div>
<div class="t" style="left:248.5px;top:267.3px;font-size:11.5px;color:#000;">Получено (...</div>
<div class="t" style="left:332.4px;top:267.3px;font-size:11.5px;color:#000;">Всего (бай...</div>
<svg class="a" style="left:359px;top:262px" width="8" height="4" viewBox="0 0 8 4"><path d="M0.5 0.5L4 3.5 7.5 0.5" stroke="#9a9a9a" fill="none"/></svg>
<div class="a" style="left:16px;top:287px;width:13px;height:13px;border:1px solid #333;background:#fff"></div>
<div class="t" style="left:34.5px;top:288.8px;font-size:11.1px;color:#000;">svchost.exe (...</div>
<div class="t" style="left:118.5px;top:288.8px;font-size:11.1px;color:#000;">6508</div>
<div class="t" style="right:1204.5px;top:288.8px;font-size:11.1px;color:#000;">179</div>
<div class="t" style="right:1124.5px;top:288.8px;font-size:11.1px;color:#000;">144</div>
<div class="t" style="right:1044.5px;top:288.8px;font-size:11.1px;color:#000;">323</div>
<div class="a" style="left:16px;top:304px;width:13px;height:13px;border:1px solid #333;background:#fff"></div>
<div class="t" style="left:34.5px;top:305.8px;font-size:11.1px;color:#000;">chrome.exe</div>
<div class="t" style="left:118.5px;top:305.8px;font-size:11.1px;color:#000;">4704</div>
<div class="t" style="right:1204.5px;top:305.8px;font-size:11.1px;color:#000;">98</div>
<div class="t" style="right:1124.5px;top:305.8px;font-size:11.1px;color:#000;">171</div>
<div class="t" style="right:1044.5px;top:305.8px;font-size:11.1px;color:#000;">269</div>
<div class="a" style="left:16px;top:321px;width:13px;height:13px;border:1px solid #333;background:#fff"></div>
<div class="t" style="left:34.5px;top:322.8px;font-size:11.1px;color:#000;">SkypeApp.exe</div>
<div class="t" style="left:118.5px;top:322.8px;font-size:11.1px;color:#000;">7076</div>
<div class="t" style="right:1204.5px;top:322.8px;font-size:11.1px;color:#000;">93</div>
<div class="t" style="right:1124.5px;top:322.8px;font-size:11.1px;color:#000;">109</div>
<div class="t" style="right:1044.5px;top:322.8px;font-size:11.1px;color:#000;">202</div>
<div class="a" style="left:16px;top:338px;width:13px;height:13px;border:1px solid #333;background:#fff"></div>
<div class="t" style="left:34.5px;top:339.8px;font-size:11.1px;color:#000;">svchost.exe (...</div>
<div class="t" style="left:118.5px;top:339.8px;font-size:11.1px;color:#000;">1780</div>
<div class="t" style="right:1204.5px;top:339.8px;font-size:11.1px;color:#000;">26</div>
<div class="t" style="right:1124.5px;top:339.8px;font-size:11.1px;color:#000;">36</div>
<div class="t" style="right:1044.5px;top:339.8px;font-size:11.1px;color:#000;">62</div>
<div class="a" style="left:16px;top:355px;width:13px;height:13px;border:1px solid #333;background:#fff"></div>
<div class="t" style="left:34.5px;top:356.8px;font-size:11.1px;color:#000;">main.exe</div>
<div class="t" style="left:118.5px;top:356.8px;font-size:11.1px;color:#000;">8820</div>
<div class="t" style="right:1204.5px;top:356.8px;font-size:11.1px;color:#000;">3</div>
<div class="t" style="right:1124.5px;top:356.8px;font-size:11.1px;color:#000;">38</div>
<div class="t" style="right:1044.5px;top:356.8px;font-size:11.1px;color:#000;">41</div>
<div class="a" style="left:16px;top:372px;width:13px;height:13px;border:1px solid #333;background:#fff"></div>
<div class="t" style="left:34.5px;top:373.8px;font-size:11.1px;color:#000;">System</div>
<div class="t" style="left:118.5px;top:373.8px;font-size:11.1px;color:#000;">4</div>
<div class="t" style="right:1204.5px;top:373.8px;font-size:11.1px;color:#000;">20</div>
<div class="t" style="right:1124.5px;top:373.8px;font-size:11.1px;color:#000;">3</div>
<div class="t" style="right:1044.5px;top:373.8px;font-size:11.1px;color:#000;">23</div>
<div class="a" style="left:16px;top:389px;width:13px;height:13px;border:1px solid #333;background:#fff"></div>
<div class="t" style="left:34.5px;top:390.8px;font-size:11.1px;color:#000;">chrome.exe</div>
<div class="t" style="left:118.5px;top:390.8px;font-size:11.1px;color:#000;">7464</div>
<div class="t" style="right:1204.5px;top:390.8px;font-size:11.1px;color:#000;">19</div>
<div class="t" style="right:1124.5px;top:390.8px;font-size:11.1px;color:#000;">0</div>
<div class="t" style="right:1044.5px;top:390.8px;font-size:11.1px;color:#000;">19</div>
<div class="a" style="left:16px;top:406px;width:13px;height:13px;border:1px solid #333;background:#fff"></div>
<div class="t" style="left:34.5px;top:407.8px;font-size:11.1px;color:#000;">svchost.exe (...</div>
<div class="t" style="left:118.5px;top:407.8px;font-size:11.1px;color:#000;">3492</div>
<div class="t" style="right:1204.5px;top:407.8px;font-size:11.1px;color:#000;">4</div>
<div class="t" style="right:1124.5px;top:407.8px;font-size:11.1px;color:#000;">9</div>
<div class="t" style="right:1044.5px;top:407.8px;font-size:11.1px;color:#000;">13</div>
<div class="a" style="left:16px;top:423px;width:13px;height:13px;border:1px solid #333;background:#fff"></div>
<div class="t" style="left:34.5px;top:424.8px;font-size:11.1px;color:#000;">OneDrive.exe</div>
<div class="t" style="left:118.5px;top:424.8px;font-size:11.1px;color:#000;">9800</div>
<div class="t" style="right:1204.5px;top:424.8px;font-size:11.1px;color:#000;">1</div>
<div class="t" style="right:1124.5px;top:424.8px;font-size:11.1px;color:#000;">4</div>
<div class="t" style="right:1044.5px;top:424.8px;font-size:11.1px;color:#000;">5</div>
<div class="a" style="left:11px;top:453px;width:541px;height:30px;border:1px solid #6a6a6a;border-top-color:#555;background:linear-gradient(#fdfdfd 0%,#f3f3f3 35%,#cfcfcf 75%,#a9a9a9 100%)"></div>
<div class="t" style="left:18.5px;top:461.7px;font-size:13px;color:#000;">Сетевая активность</div>
<div class="a" style="left:522px;top:458px;width:19px;height:19px;border-radius:50%;border:1px solid #8c8c8c;background:radial-gradient(circle at 50% 35%,#fff 0,#f2f2f2 50%,#d4d4d4 100%)"></div>
<svg class="a" style="left:527px;top:463px" width="10" height="8" viewBox="0 0 10 8"><path d="M1 6.5L5 2.5 9 6.5" stroke="#1a1a1a" stroke-width="2.2" fill="none"/></svg>
<div class="a" style="left:164px;top:461.5px;width:11px;height:12px;border:1px solid #fff;background:#0a8a0a;background-image:repeating-linear-gradient(90deg,rgba(0,0,0,.35) 0 1px,transparent 1px 2px),repeating-linear-gradient(0deg,rgba(0,0,0,.35) 0 1px,transparent 1px 2px)"></div>
<div class="t" style="left:180px;top:462.7px;font-size:11.5px;color:#000;">0 кбит/с - сетевой ввод-в...</div>
<div class="a" style="left:345px;top:462px;width:11px;height:12px;border:1px solid #fff;background:#0010f0;background-image:repeating-linear-gradient(90deg,rgba(0,0,0,.35) 0 1px,transparent 1px 2px),repeating-linear-gradient(0deg,rgba(0,0,0,.35) 0 1px,transparent 1px 2px)"></div>
<div class="t" style="left:362px;top:462.8px;font-size:11.3px;color:#000;">Использование сети: 0%</div>
<div class="a" style="left:11px;top:483px;width:541px;height:186px;background:#fff;border:1px solid #7c7c7c;border-top:0;overflow:hidden"></div>
<div class="a" style="left:111px;top:484px;width:1px;height:22px;background:#e5e5e5"></div>
<div class="a" style="left:111px;top:506px;width:1px;height:162px;background:#eef3fa"></div>
<div class="a" style="left:161px;top:484px;width:1px;height:22px;background:#e5e5e5"></div>
<div class="a" style="left:161px;top:506px;width:1px;height:162px;background:#eef3fa"></div>
<div class="a" style="left:281px;top:484px;width:1px;height:22px;background:#e5e5e5"></div>
<div class="a" style="left:281px;top:506px;width:1px;height:162px;background:#eef3fa"></div>
<div class="a" style="left:361px;top:484px;width:1px;height:22px;background:#e5e5e5"></div>
<div class="a" style="left:361px;top:506px;width:1px;height:162px;background:#eef3fa"></div>
<div class="a" style="left:441px;top:484px;width:1px;height:22px;background:#e5e5e5"></div>
<div class="a" style="left:441px;top:506px;width:1px;height:162px;background:#eef3fa"></div>
<div class="a" style="left:521px;top:484px;width:1px;height:22px;background:#e5e5e5"></div>
<div class="a" style="left:521px;top:506px;width:1px;height:162px;background:#eef3fa"></div>
<div class="t" style="left:18.3px;top:489.1px;font-size:11.5px;color:#000;">Образ</div>
<div class="t" style="left:118.2px;top:489.1px;font-size:11.5px;color:#000;">ИД п...</div>
<div class="t" style="left:168.4px;top:489.1px;font-size:11.5px;color:#000;">Адрес</div>
<div class="t" style="left:288px;top:489.1px;font-size:11.5px;color:#000;">Отправлен...</div>
<div class="t" style="left:368px;top:489.1px;font-size:11.5px;color:#000;">Получено (...</div>
<div class="t" style="left:452px;top:489.1px;font-size:11.5px;color:#000;">Всего (бай...</div>
<svg class="a" style="left:478px;top:484px" width="8" height="4" viewBox="0 0 8 4"><path d="M0.5 0.5L4 3.5 7.5 0.5" stroke="#9a9a9a" fill="none"/></svg>
<div class="a" style="left:12px;top:524px;width:509px;height:17px;background:#d9d9d9"></div>
<div class="a" style="left:0;top:0;width:1439px;height:668px;overflow:hidden">
<div class="t" style="left:18.3px;top:510.8px;font-size:11.1px;color:#000;">chrome.exe</div>
<div class="t" style="left:118.2px;top:510.8px;font-size:11.1px;color:#000;">4704</div>
<div class="t" style="left:168.4px;top:510.8px;font-size:11.1px;color:#000;">portal.mail.ru</div>
<div class="t" style="right:1084.5px;top:510.8px;font-size:11.1px;color:#000;">60</div>
<div class="t" style="right:1005px;top:510.8px;font-size:11.1px;color:#000;">83</div>
<div class="t" style="right:925px;top:510.8px;font-size:11.1px;color:#000;">143</div>
<div class="t" style="left:18.3px;top:527.8px;font-size:11.1px;color:#000;">main.exe</div>
<div class="t" style="left:118.2px;top:527.8px;font-size:11.1px;color:#000;">8820</div>
<div class="t" style="left:168.4px;top:527.8px;font-size:11.1px;color:#000;">77.75.129.219</div>
<div class="t" style="right:1084.5px;top:527.8px;font-size:11.1px;color:#000;">3</div>
<div class="t" style="right:1005px;top:527.8px;font-size:11.1px;color:#000;">38</div>
<div class="t" style="right:925px;top:527.8px;font-size:11.1px;color:#000;">41</div>
<div class="t" style="left:18.3px;top:544.8px;font-size:11.1px;color:#000;">svchost.exe (Ne...</div>
<div class="t" style="left:118.2px;top:544.8px;font-size:11.1px;color:#000;">1780</div>
<div class="t" style="left:168.4px;top:544.8px;font-size:11.1px;color:#000;">DESKTOP-AMDO2BJ</div>
<div class="t" style="right:1084.5px;top:544.8px;font-size:11.1px;color:#000;">0</div>
<div class="t" style="right:1005px;top:544.8px;font-size:11.1px;color:#000;">34</div>
<div class="t" style="right:925px;top:544.8px;font-size:11.1px;color:#000;">34</div>
<div class="t" style="left:18.3px;top:561.8px;font-size:11.1px;color:#000;">chrome.exe</div>
<div class="t" style="left:118.2px;top:561.8px;font-size:11.1px;color:#000;">7464</div>
<div class="t" style="left:168.4px;top:561.8px;font-size:11.1px;color:#000;">239.255.255.250</div>
<div class="t" style="right:1084.5px;top:561.8px;font-size:11.1px;color:#000;">19</div>
<div class="t" style="right:1005px;top:561.8px;font-size:11.1px;color:#000;">0</div>
<div class="t" style="right:925px;top:561.8px;font-size:11.1px;color:#000;">19</div>
<div class="t" style="left:18.3px;top:578.8px;font-size:11.1px;color:#000;">svchost.exe (net...</div>
<div class="t" style="left:118.2px;top:578.8px;font-size:11.1px;color:#000;">3492</div>
<div class="t" style="left:168.4px;top:578.8px;font-size:11.1px;color:#000;">51.105.249.223</div>
<div class="t" style="right:1084.5px;top:578.8px;font-size:11.1px;color:#000;">4</div>
<div class="t" style="right:1005px;top:578.8px;font-size:11.1px;color:#000;">9</div>
<div class="t" style="right:925px;top:578.8px;font-size:11.1px;color:#000;">13</div>
<div class="t" style="left:18.3px;top:595.8px;font-size:11.1px;color:#000;">svchost.exe (Ne...</div>
<div class="t" style="left:118.2px;top:595.8px;font-size:11.1px;color:#000;">1780</div>
<div class="t" style="left:168.4px;top:595.8px;font-size:11.1px;color:#000;">10.0.0.1</div>
<div class="t" style="right:1084.5px;top:595.8px;font-size:11.1px;color:#000;">12</div>
<div class="t" style="right:1005px;top:595.8px;font-size:11.1px;color:#000;">0</div>
<div class="t" style="right:925px;top:595.8px;font-size:11.1px;color:#000;">12</div>
<div class="t" style="left:18.3px;top:612.8px;font-size:11.1px;color:#000;">System</div>
<div class="t" style="left:118.2px;top:612.8px;font-size:11.1px;color:#000;">4</div>
<div class="t" style="left:168.4px;top:612.8px;font-size:11.1px;color:#000;">10.0.0.1</div>
<div class="t" style="right:1084.5px;top:612.8px;font-size:11.1px;color:#000;">8</div>
<div class="t" style="right:1005px;top:612.8px;font-size:11.1px;color:#000;">0</div>
<div class="t" style="right:925px;top:612.8px;font-size:11.1px;color:#000;">8</div>
<div class="t" style="left:18.3px;top:629.8px;font-size:11.1px;color:#000;">svchost.exe (Ne...</div>
<div class="t" style="left:118.2px;top:629.8px;font-size:11.1px;color:#000;">1780</div>
<div class="t" style="left:168.4px;top:629.8px;font-size:11.1px;color:#000;">224.0.0.252</div>
<div class="t" style="right:1084.5px;top:629.8px;font-size:11.1px;color:#000;">6</div>
<div class="t" style="right:1005px;top:629.8px;font-size:11.1px;color:#000;">0</div>
<div class="t" style="right:925px;top:629.8px;font-size:11.1px;color:#000;">6</div>
<div class="t" style="left:18.3px;top:646.8px;font-size:11.1px;color:#000;">svchost.exe (Ne...</div>
<div class="t" style="left:118.2px;top:646.8px;font-size:11.1px;color:#000;">1780</div>
<div class="t" style="left:168.4px;top:646.8px;font-size:11.1px;color:#000;">ff02::1:3</div>
<div class="t" style="right:1084.5px;top:646.8px;font-size:11.1px;color:#000;">6</div>
<div class="t" style="right:1005px;top:646.8px;font-size:11.1px;color:#000;">0</div>
<div class="t" style="right:925px;top:646.8px;font-size:11.1px;color:#000;">6</div>
<div class="t" style="left:18.3px;top:663.8px;font-size:11.1px;color:#000;">OneDrive.exe</div>
<div class="t" style="left:118.2px;top:663.8px;font-size:11.1px;color:#000;">9800</div>
<div class="t" style="left:168.4px;top:663.8px;font-size:11.1px;color:#000;">51.105.249.220</div>
<div class="t" style="right:1084.5px;top:663.8px;font-size:11.1px;color:#000;">1</div>
<div class="t" style="right:1005px;top:663.8px;font-size:11.1px;color:#000;">4</div>
<div class="t" style="right:925px;top:663.8px;font-size:11.1px;color:#000;">5</div>
</div>
<div class="a" style="left:535px;top:484px;width:16px;height:184px;background:#f0f0f0"></div>
<svg class="a" style="left:539px;top:489px" width="8" height="5" viewBox="0 0 8 5"><path d="M0.5 4.5L4 1 7.5 4.5" stroke="#606060" stroke-width="1.3" fill="none"/></svg>
<div class="a" style="left:536px;top:524px;width:14px;height:72px;background:#cdcdcd"></div>
<svg class="a" style="left:539px;top:657px" width="8" height="5" viewBox="0 0 8 5"><path d="M0.5 0.5L4 4 7.5 0.5" stroke="#606060" stroke-width="1.3" fill="none"/></svg>
<div class="a" style="left:11px;top:675px;width:541px;height:30px;border:1px solid #6a6a6a;border-top-color:#555;background:linear-gradient(#fdfdfd 0%,#f3f3f3 35%,#cfcfcf 75%,#a9a9a9 100%)"></div>
<div class="t" style="left:18.5px;top:683.7px;font-size:13px;color:#000;">TCP-подключения</div>
<div class="a" style="left:522px;top:680px;width:19px;height:19px;border-radius:50%;border:1px solid #8c8c8c;background:radial-gradient(circle at 50% 35%,#fff 0,#f2f2f2 50%,#d4d4d4 100%)"></div>
<svg class="a" style="left:527px;top:686px" width="10" height="8" viewBox="0 0 10 8"><path d="M1 1.5L5 5.5 9 1.5" stroke="#1a1a1a" stroke-width="2.2" fill="none"/></svg>
<div class="a" style="left:11px;top:711px;width:541px;height:30px;border:1px solid #6a6a6a;border-top-color:#555;background:linear-gradient(#fdfdfd 0%,#f3f3f3 35%,#cfcfcf 75%,#a9a9a9 100%)"></div>
<div class="t" style="left:18.5px;top:719.7px;font-size:13px;color:#000;">Прослушиваемые порты</div>
<div class="a" style="left:522px;top:716px;width:19px;height:19px;border-radius:50%;border:1px solid #8c8c8c;background:radial-gradient(circle at 50% 35%,#fff 0,#f2f2f2 50%,#d4d4d4 100%)"></div>
<svg class="a" style="left:527px;top:722px" width="10" height="8" viewBox="0 0 10 8"><path d="M1 1.5L5 5.5 9 1.5" stroke="#1a1a1a" stroke-width="2.2" fill="none"/></svg>
<div class="a" style="left:554px;top:231px;width:16px;height:510px;background:#f0f0f0"></div>
<svg class="a" style="left:558px;top:236px" width="8" height="5" viewBox="0 0 8 5"><path d="M0.5 4.5L4 1 7.5 4.5" stroke="#606060" stroke-width="1.3" fill="none"/></svg>
<div class="a" style="left:555px;top:246px;width:14px;height:471px;background:#cdcdcd"></div>
<svg class="a" style="left:558px;top:730px" width="8" height="5" viewBox="0 0 8 5"><path d="M0.5 0.5L4 4 7.5 0.5" stroke="#606060" stroke-width="1.3" fill="none"/></svg>
<div class="a" style="left:570px;top:227px;width:2px;height:514px;background:#8a8a8a"></div>
<div class="a" style="left:576px;top:231px;width:200px;height:30px;border:1px solid #6a6a6a;border-top-color:#555;background:linear-gradient(#fdfdfd 0%,#f3f3f3 35%,#cfcfcf 75%,#a9a9a9 100%)"></div>
<div class="t" style="left:583.5px;top:239.7px;font-size:13px;color:#000;"></div>
<div class="a" style="left:587px;top:236px;width:19px;height:19px;border-radius:50%;border:1px solid #8c8c8c;background:radial-gradient(circle at 50% 35%,#fff 0,#f2f2f2 50%,#d4d4d4 100%)"></div>
<svg class="a" style="left:593px;top:241px" width="8" height="11" viewBox="0 0 8 11"><path d="M1.5 1L5.5 5.5 1.5 10" stroke="#1a1a1a" stroke-width="2.2" fill="none"/></svg>
<div class="a" style="left:677px;top:234px;width:85px;height:23px;background:#e1e1e1"></div>
<div class="t" style="left:701.4px;top:240.1px;font-size:12px;color:#000;">Вид</div>
<div class="a" style="left:747px;top:237px;width:1px;height:17px;background:#333"></div>
<svg class="a" style="left:750px;top:244px" width="10" height="6" viewBox="0 0 10 6"><path d="M0 0H10L5 6z" fill="#000"/></svg>
<div class="a" style="left:576px;top:261px;width:200px;height:480px;background:#fff;border-left:1px solid #7c7c7c;border-right:1px solid #7c7c7c"></div>
<div class="a" style="left:778px;top:231px;width:16px;height:510px;background:#f0f0f0"></div>
<svg class="a" style="left:782px;top:236px" width="8" height="5" viewBox="0 0 8 5"><path d="M0.5 4.5L4 1 7.5 4.5" stroke="#606060" stroke-width="1.3" fill="none"/></svg>
<div class="a" style="left:779px;top:246px;width:14px;height:282px;background:#cdcdcd"></div>
<svg class="a" style="left:782px;top:730px" width="8" height="5" viewBox="0 0 8 5"><path d="M0.5 0.5L4 4 7.5 0.5" stroke="#606060" stroke-width="1.3" fill="none"/></svg>
<div class="t" style="left:589.5px;top:266.8px;font-size:12px;color:#000;">Сеть</div>
<div class="t" style="right:684px;top:266.8px;font-size:12px;color:#000;">10 Кбит/с</div>
<svg class="a" style="left:759px;top:271px" width="8" height="126" viewBox="0 0 8 126"><path d="M1 1.5H6.5V124.5H1" stroke="#000" stroke-width="1" fill="none" shape-rendering="crispEdges"/></svg>
<div class="a" style="left:587px;top:282px;width:170px;height:102px;border-top:2px solid #a0a0a0;border-left:2px solid #a0a0a0;overflow:hidden;background:#000"><svg class="a" style="left:0;top:0" width="168" height="100" viewBox="0 0 168 100"><g stroke="#008a00" stroke-width="1"><path d="M12.5 0V100"/><path d="M27.5 0V100"/><path d="M42.5 0V100"/><path d="M57.5 0V100"/><path d="M72.5 0V100"/><path d="M87.5 0V100"/><path d="M102.5 0V100"/><path d="M117.5 0V100"/><path d="M132.5 0V100"/><path d="M147.5 0V100"/><path d="M162.5 0V100"/><path d="M0 10.5H168"/><path d="M0 20.5H168"/><path d="M0 30.5H168"/><path d="M0 40.5H168"/><path d="M0 50.5H168"/><path d="M0 60.5H168"/><path d="M0 70.5H168"/><path d="M0 80.5H168"/><path d="M0 90.5H168"/></g><defs><clipPath id="c284"><polygon points="0,0 6,0 7,78 9,94 10,99 12,94 14,93 16,95 18,98 19,92 21,78 22,88 24,96 26,99 27,0 34,0 35,36 36,86 39,94 42,99 44,92 48,77 49,0 54,0 55,94 57,99 59,86 61,72 64,49 66,66 68,84 69,86 69.5,0 75.5,0 76,80 78,99 80,98 84,99 87,97 91,96 96,97 97,91 99,78 100,86 102,94 104,98 110,97 113,99 115,95 120,97 123,92 126,92 129,97 132,99 134,94 137,83 139,88 141,99 141.5,0 147.5,0 148,97 150,99 153,98 156,92 157,80 159,91 161,98 163,91 165,85 167,94 168,99 168,100 0,100"/></clipPath></defs><polygon points="0,0 6,0 7,78 9,94 10,99 12,94 14,93 16,95 18,98 19,92 21,78 22,88 24,96 26,99 27,0 34,0 35,36 36,86 39,94 42,99 44,92 48,77 49,0 54,0 55,94 57,99 59,86 61,72 64,49 66,66 68,84 69,86 69.5,0 75.5,0 76,80 78,99 80,98 84,99 87,97 91,96 96,97 97,91 99,78 100,86 102,94 104,98 110,97 113,99 115,95 120,97 123,92 126,92 129,97 132,99 134,94 137,83 139,88 141,99 141.5,0 147.5,0 148,97 150,99 153,98 156,92 157,80 159,91 161,98 163,91 165,85 167,94 168,99 168,100 0,100" fill="#006000"/><g stroke="#00ff00" stroke-width="1" clip-path="url(#c284)"><path d="M12.5 0V100"/><path d="M27.5 0V100"/><path d="M42.5 0V100"/><path d="M57.5 0V100"/><path d="M72.5 0V100"/><path d="M87.5 0V100"/><path d="M102.5 0V100"/><path d="M117.5 0V100"/><path d="M132.5 0V100"/><path d="M147.5 0V100"/><path d="M162.5 0V100"/><path d="M0 10.5H168"/><path d="M0 20.5H168"/><path d="M0 30.5H168"/><path d="M0 40.5H168"/><path d="M0 50.5H168"/><path d="M0 60.5H168"/><path d="M0 70.5H168"/><path d="M0 80.5H168"/><path d="M0 90.5H168"/></g><polyline points="0,0 6,0 7,78 9,94 10,99 12,94 14,93 16,95 18,98 19,92 21,78 22,88 24,96 26,99 27,0 34,0 35,36 36,86 39,94 42,99 44,92 48,77 49,0 54,0 55,94 57,99 59,86 61,72 64,49 66,66 68,84 69,86 69.5,0 75.5,0 76,80 78,99 80,98 84,99 87,97 91,96 96,97 97,91 99,78 100,86 102,94 104,98 110,97 113,99 115,95 120,97 123,92 126,92 129,97 132,99 134,94 137,83 139,88 141,99 141.5,0 147.5,0 148,97 150,99 153,98 156,92 157,80 159,91 161,98 163,91 165,85 167,94 168,99" fill="none" stroke="#00ff00" stroke-width="1.2"/></svg></div>
<div class="t" style="left:589.3px;top:388.1px;font-size:12px;color:#000;">60 секунд</div>
<div class="t" style="right:683.7px;top:388.1px;font-size:12px;color:#000;">0</div>
<div class="t" style="left:589.3px;top:405.0px;font-size:12px;color:#000;">TCP-подключения</div>
<div class="t" style="right:683.7px;top:405.0px;font-size:12px;color:#000;">50</div>
<svg class="a" style="left:759px;top:409px" width="8" height="126" viewBox="0 0 8 126"><path d="M1 1.5H6.5V124.5H1" stroke="#000" stroke-width="1" fill="none" shape-rendering="crispEdges"/></svg>
<div class="a" style="left:587px;top:420px;width:170px;height:102px;border-top:2px solid #a0a0a0;border-left:2px solid #a0a0a0;overflow:hidden;background:#000"><svg class="a" style="left:0;top:0" width="168" height="100" viewBox="0 0 168 100"><g stroke="#008a00" stroke-width="1"><path d="M12.5 0V100"/><path d="M27.5 0V100"/><path d="M42.5 0V100"/><path d="M57.5 0V100"/><path d="M72.5 0V100"/><path d="M87.5 0V100"/><path d="M102.5 0V100"/><path d="M117.5 0V100"/><path d="M132.5 0V100"/><path d="M147.5 0V100"/><path d="M162.5 0V100"/><path d="M0 10.5H168"/><path d="M0 20.5H168"/><path d="M0 30.5H168"/><path d="M0 40.5H168"/><path d="M0 50.5H168"/><path d="M0 60.5H168"/><path d="M0 70.5H168"/><path d="M0 80.5H168"/><path d="M0 90.5H168"/></g><defs><clipPath id="c422"><polygon points="0,40.5 36,40.5 38,42.5 168,42.5 168,100 0,100"/></clipPath></defs><polygon points="0,40.5 36,40.5 38,42.5 168,42.5 168,100 0,100" fill="#006000"/><g stroke="#00ff00" stroke-width="1" clip-path="url(#c422)"><path d="M12.5 0V100"/><path d="M27.5 0V100"/><path d="M42.5 0V100"/><path d="M57.5 0V100"/><path d="M72.5 0V100"/><path d="M87.5 0V100"/><path d="M102.5 0V100"/><path d="M117.5 0V100"/><path d="M132.5 0V100"/><path d="M147.5 0V100"/><path d="M162.5 0V100"/><path d="M0 10.5H168"/><path d="M0 20.5H168"/><path d="M0 30.5H168"/><path d="M0 40.5H168"/><path d="M0 50.5H168"/><path d="M0 60.5H168"/><path d="M0 70.5H168"/><path d="M0 80.5H168"/><path d="M0 90.5H168"/></g><polyline points="0,40.5 36,40.5 38,42.5 168,42.5" fill="none" stroke="#00ff00" stroke-width="1.2"/></svg></div>
<div class="t" style="right:683.7px;top:525.8px;font-size:12px;color:#000;">0</div>
<div class="t" style="left:589.4px;top:543.3px;font-size:12px;color:#000;">Беспроводная сеть</div>
<div class="t" style="right:684px;top:543.3px;font-size:12px;color:#000;">100%</div>
<svg class="a" style="left:759px;top:548px" width="8" height="124" viewBox="0 0 8 124"><path d="M1 1.5H6.5V122.5H1" stroke="#000" stroke-width="1" fill="none" shape-rendering="crispEdges"/></svg>
<div class="a" style="left:587px;top:558px;width:170px;height:102px;border-top:2px solid #a0a0a0;border-left:2px solid #a0a0a0;overflow:hidden;background:#000"><svg class="a" style="left:0;top:0" width="168" height="100" viewBox="0 0 168 100"><g stroke="#008a00" stroke-width="1"><path d="M12.5 0V100"/><path d="M27.5 0V100"/><path d="M42.5 0V100"/><path d="M57.5 0V100"/><path d="M72.5 0V100"/><path d="M87.5 0V100"/><path d="M102.5 0V100"/><path d="M117.5 0V100"/><path d="M132.5 0V100"/><path d="M147.5 0V100"/><path d="M162.5 0V100"/><path d="M0 10.5H168"/><path d="M0 20.5H168"/><path d="M0 30.5H168"/><path d="M0 40.5H168"/><path d="M0 50.5H168"/><path d="M0 60.5H168"/><path d="M0 70.5H168"/><path d="M0 80.5H168"/><path d="M0 90.5H168"/></g></svg></div>
<div class="t" style="right:683.7px;top:664.4px;font-size:12px;color:#000;">0</div>
<div class="t" style="left:589.4px;top:681.1px;font-size:12px;color:#000;">Подключение по лока...</div>
<div class="t" style="right:684px;top:681.1px;font-size:12px;color:#000;">100%</div>
<svg class="a" style="left:759px;top:686px" width="8" height="55" viewBox="0 0 8 55"><path d="M1 1.5H6.5V55" stroke="#000" stroke-width="1.3" fill="none"/></svg>
<div class="a" style="left:587px;top:697px;width:170px;height:44px;border-top:2px solid #a0a0a0;border-left:2px solid #a0a0a0;overflow:hidden;background:#000"><svg class="a" style="left:0;top:0" width="168" height="100" viewBox="0 0 168 100"><g stroke="#008a00" stroke-width="1"><path d="M12.5 0V100"/><path d="M27.5 0V100"/><path d="M42.5 0V100"/><path d="M57.5 0V100"/><path d="M72.5 0V100"/><path d="M87.5 0V100"/><path d="M102.5 0V100"/><path d="M117.5 0V100"/><path d="M132.5 0V100"/><path d="M147.5 0V100"/><path d="M162.5 0V100"/><path d="M0 10.5H168"/><path d="M0 20.5H168"/><path d="M0 30.5H168"/><path d="M0 40.5H168"/><path d="M0 50.5H168"/><path d="M0 60.5H168"/><path d="M0 70.5H168"/><path d="M0 80.5H168"/><path d="M0 90.5H168"/></g></svg></div>
<!--/RESMON-->
<!--CMD-->
<div class="a" style="left:801px;top:214px;width:660px;height:511px;background:#000;border-top:1px solid #b0b0b0;box-shadow:0 4px 12px rgba(0,0,0,0.45)"></div>
<div class="a" style="left:802px;top:215px;width:640px;height:30px;background:#fff"></div>
<svg class="a" style="left:810px;top:224px" width="16" height="12" viewBox="0 0 16 12"><rect x="0.5" y="0.5" width="15" height="11" fill="#000" stroke="#7a7a7a"/><rect x="1" y="1" width="14" height="1.5" fill="#bbb"/><text x="1.5" y="9.5" font-family="Liberation Sans" font-weight="bold" font-size="6.5" fill="#fff">C:\</text><rect x="10" y="8" width="4" height="1.2" fill="#fff"/></svg>
<div class="t" style="left:831px;top:224.1px;font-size:11.6px;color:#939393">Командная строка - ping  -t 77.75.129.219</div>
<div class="a" style="left:802px;top:246.7px;white-space:pre;font-family:'Liberation Mono',monospace;font-size:13.333px;line-height:16px;color:#c8c8c8">Ответ от 77.75.129.219: число байт=32 время=37мс TTL=49
Ответ от 77.75.129.219: число байт=32 время=36мс TTL=49
Ответ от 77.75.129.219: число байт=32 время=34мс TTL=49
Ответ от 77.75.129.219: число байт=32 время=42мс TTL=49
Ответ от 77.75.129.219: число байт=32 время=36мс TTL=49
Ответ от 77.75.129.219: число байт=32 время=55мс TTL=49
Ответ от 77.75.129.219: число байт=32 время=34мс TTL=49
Ответ от 77.75.129.219: число байт=32 время=42мс TTL=49
Ответ от 77.75.129.219: число байт=32 время=39мс TTL=49
Ответ от 77.75.129.219: число байт=32 время=36мс TTL=49
Ответ от 77.75.129.219: число байт=32 время=36мс TTL=49
Ответ от 77.75.129.219: число байт=32 время=36мс TTL=49
Ответ от 77.75.129.219: число байт=32 время=38мс TTL=49
Ответ от 77.75.129.219: число байт=32 время=40мс TTL=49
Ответ от 77.75.129.219: число байт=32 время=35мс TTL=49
Ответ от 77.75.129.219: число байт=32 время=38мс TTL=49
Ответ от 77.75.129.219: число байт=32 время=37мс TTL=49
Ответ от 77.75.129.219: число байт=32 время=37мс TTL=49
Ответ от 77.75.129.219: число байт=32 время=40мс TTL=49
Ответ от 77.75.129.219: число байт=32 время=36мс TTL=49
Ответ от 77.75.129.219: число байт=32 время=38мс TTL=49
Ответ от 77.75.129.219: число байт=32 время=37мс TTL=49
Ответ от 77.75.129.219: число байт=32 время=39мс TTL=49
Ответ от 77.75.129.219: число байт=32 время=34мс TTL=49
Ответ от 77.75.129.219: число байт=32 время=39мс TTL=49
Ответ от 77.75.129.219: число байт=32 время=46мс TTL=49
Ответ от 77.75.129.219: число байт=32 время=39мс TTL=49
Ответ от 77.75.129.219: число байт=32 время=39мс TTL=49
Ответ от 77.75.129.219: число байт=32 время=35мс TTL=49</div>
<div class="a" style="left:802px;top:385px;width:8px;height:3px;background:#f0f0f0"></div>
<!--/CMD-->
<!--TRAY-->
<div class="a" style="left:1113px;top:40px;width:80px;height:80px;background:linear-gradient(#2b2b2b 0%,#2c2c2c 38%,#4a4a4a 62%,#505050 80%,#464646 100%);border:1px solid #5b5b5b;box-shadow:0 4px 10px rgba(0,0,0,0.45)"></div>
<div class="a" style="left:1114px;top:81px;width:38px;height:38px;background:#626262"></div>
<svg class="a" style="left:1125px;top:52px" width="16" height="16" viewBox="0 0 16 16"><rect width="16" height="16" rx="2" fill="#262b36"/><path d="M6.5 3.5H15V12.5H7.5Q3 12 1.5 8.5Q3.5 4 6.5 3.5z" fill="#76b900"/><path d="M2.5 8.3Q5 4.8 8.5 5T12.5 8.8Q10 11 7 11.2Q4.5 11 3.5 9" fill="none" stroke="#262b36" stroke-width="0.9"/><path d="M5.5 8.5Q6.5 6.5 8.5 6.8T10.2 9Q8.6 10 7 9.8" fill="none" stroke="#262b36" stroke-width="0.8"/></svg>
<svg class="a" style="left:1167px;top:53px" width="13" height="14" viewBox="0 0 13 14"><rect x="0.5" y="0.5" width="12" height="13" fill="#fff"/><rect x="1.5" y="1.5" width="10" height="2.5" fill="#444"/><path d="M2 2.7h9" stroke="#fff" stroke-width="0.6" stroke-dasharray="1 1"/><rect x="1.5" y="4" width="10" height="8.5" fill="#4cb8f5"/></svg>
<svg class="a" style="left:1125px;top:92px" width="16" height="16" viewBox="0 0 16 16"><path d="M1 15C2 9 8 3 15 1c-1 6-6 11-14 14z" fill="#9a4ad8"/><path d="M2 14C6 9 10 5 14 2" stroke="#e0c0ff" stroke-width="0.8" fill="none"/></svg>
<!--/TRAY-->
</body></html>
